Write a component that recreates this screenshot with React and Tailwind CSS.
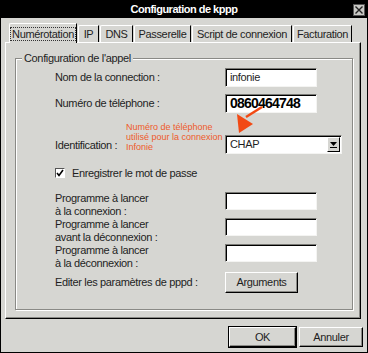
import React from "react";

const FONT = { fontFamily: '"Liberation Sans", Arial, sans-serif' };

const tabs = [
  { label: "Numérotation", w: "w-[68px]", active: true },
  { label: "IP", w: "w-[21px]" },
  { label: "DNS", w: "w-[33px]" },
  { label: "Passerelle", w: "w-[57px]" },
  { label: "Script de connexion", w: "w-[100px]" },
  { label: "Facturation", w: "w-[59px]" },
];

function Field({ className = "", children }) {
  return (
    <div
      className={
        "bg-white border border-t-[#7a7a76] border-l-[#7a7a76] border-r-[#f4f4f2] border-b-[#f4f4f2] shadow-[inset_1px_1px_0_#000] flex items-center pl-[4px] " +
        className
      }
    >
      {children}
    </div>
  );
}

function Button({ className = "", children }) {
  return (
    <div
      className={
        "flex items-center justify-center border border-t-white border-l-white border-r-black border-b-black shadow-[inset_-1px_-1px_0_#8a8a86] " +
        className
      }
    >
      {children}
    </div>
  );
}

function ProgRow({ line1, line2, mt }) {
  return (
    <div className={"flex h-[26px] " + mt}>
      <div className="w-[170px] leading-[13px]">
        <div>{line1}</div>
        <div>{line2}</div>
      </div>
      <Field className="w-[92px] h-[18px]" />
    </div>
  );
}

export default function App() {
  return (
    <div
      style={FONT}
      className="relative w-[368px] h-[353px] bg-[#d6d6d2] border border-black flex flex-col text-[11px] tracking-[-0.35px] text-[#1e1e1e] overflow-hidden"
    >
      {/* title bar */}
      <div className="relative h-[17px] bg-black flex items-center justify-center">
        <span className="text-white font-bold text-[11px] tracking-[-0.5px]">Configuration de kppp</span>
        <div className="absolute right-[2px] top-[3px] w-[12px] h-[12px] bg-[#c9c9c5] border border-[#555] flex items-center justify-center">
          <svg width="8" height="8" viewBox="0 0 8 8">
            <path d="M0.5 0.5 L7.5 7.5 M7.5 0.5 L0.5 7.5" stroke="#222" strokeWidth="1.4" />
          </svg>
        </div>
      </div>

      <div className="px-[4px] pt-[5px]">
        {/* tabs */}
        <div className="flex items-end pl-[4px] whitespace-nowrap">
          {tabs.map((t, i) =>
            t.active ? (
              <div
                key={i}
                className={
                  "relative z-10 -mb-px h-[20px] bg-[#d6d6d2] border-t border-l border-white border-r border-r-black rounded-tl-[2px] flex items-center justify-center " +
                  t.w
                }
              >
                <span className="outline outline-1 outline-dotted outline-[#333] px-[1px] leading-[12px]">
                  {t.label}
                </span>
              </div>
            ) : (
              <div
                key={i}
                className={
                  "ml-px h-[17px] border-t border-l border-white border-r border-r-black rounded-tl-[2px] flex items-center justify-center " +
                  t.w
                }
              >
                {t.label}
              </div>
            )
          )}
        </div>

        {/* panel */}
        <div className="w-[356px] h-[277px] border border-t-white border-l-white border-r-black border-b-black shadow-[inset_-1px_-1px_0_#8a8a86] pt-[15px] pl-[9px]">
          <div className="relative w-[338px] h-[252px] border border-[#8a8a86] shadow-[inset_1px_1px_0_#fff,1px_1px_0_#fff] pl-[39px] pt-[9px]">
            <span className="absolute -top-[8px] left-[6px] px-[2px] bg-[#d6d6d2] leading-[14px]">
              Configuration de l'appel
            </span>

            <div className="flex items-center h-[19px]">
              <div className="w-[170px]">Nom de la connection :</div>
              <Field className="w-[92px] h-[19px]">infonie</Field>
            </div>

            <div className="flex items-center h-[19px] mt-[7px]">
              <div className="w-[170px]">Numéro de téléphone :</div>
              <Field className="w-[92px] h-[19px]">
                <span className="font-bold text-[14px] text-black tracking-[-0.8px]">0860464748</span>
              </Field>
            </div>

            <div className="flex items-center h-[19px] mt-[22px]">
              <div className="w-[170px] pt-[2px]">Identification :</div>
              <Field className="relative z-10 w-[117px] h-[19px] justify-between pr-[1px]">
                <span>CHAP</span>
                <div className="w-[13px] h-[15px] bg-[#d6d6d2] border border-t-white border-l-white border-r-black border-b-black flex flex-col items-center justify-center gap-[1px]">
                  <svg width="7" height="4" viewBox="0 0 7 4">
                    <path d="M0 0 H7 L3.5 4 Z" fill="#000" />
                  </svg>
                  <div className="w-[7px] h-[1px] bg-black" />
                </div>
              </Field>
            </div>

            <div className="flex items-center h-[14px] mt-[12px]">
              <div className="w-[10px] h-[10px] bg-white border border-t-[#555] border-l-[#555] border-r-white border-b-white flex items-center justify-center">
                <svg width="8" height="8" viewBox="0 0 8 8">
                  <path d="M1 4 L3 6.5 L7 1" stroke="#000" strokeWidth="1.6" fill="none" />
                </svg>
              </div>
              <span className="ml-[7px]">Enregistrer le mot de passe</span>
            </div>

            <ProgRow line1="Programme à lancer" line2="à la connexion :" mt="mt-[12px]" />
            <ProgRow line1="Programme à lancer" line2="avant la déconnexion :" mt="" />
            <ProgRow line1="Programme à lancer" line2="à la déconnexion :" mt="" />

            <div className="flex items-center h-[21px] mt-[2px]">
              <div className="w-[170px]">Editer les paramètres de pppd :</div>
              <Button className="w-[73px] h-[21px]">Arguments</Button>
            </div>
          </div>
        </div>

        {/* bottom buttons */}
        <div className="flex justify-end gap-[3px] mt-[8px]">
          <Button className="w-[67px] h-[20px] outline outline-1 outline-black">OK</Button>
          <Button className="w-[64px] h-[20px]">Annuler</Button>
        </div>
      </div>

      {/* annotation drawn over the dialog */}
      <div className="absolute left-[125px] top-[121px] w-[99px] overflow-hidden whitespace-nowrap text-[9px] tracking-[0px] leading-[10px] text-[#ee5a2b]">
        <div>Numéro de téléphone</div>
        <div>utilisé pour la connexion :</div>
        <div>Infonie</div>
      </div>
      <svg className="absolute left-[229px] top-[99px]" width="40" height="40" viewBox="0 0 40 40">
        <path d="M16 17 L32 7" stroke="#f24a14" strokeWidth="2.5" />
        <polygon points="7,14 23,24 9,33" fill="#f24a14" />
      </svg>
    </div>
  );
}
